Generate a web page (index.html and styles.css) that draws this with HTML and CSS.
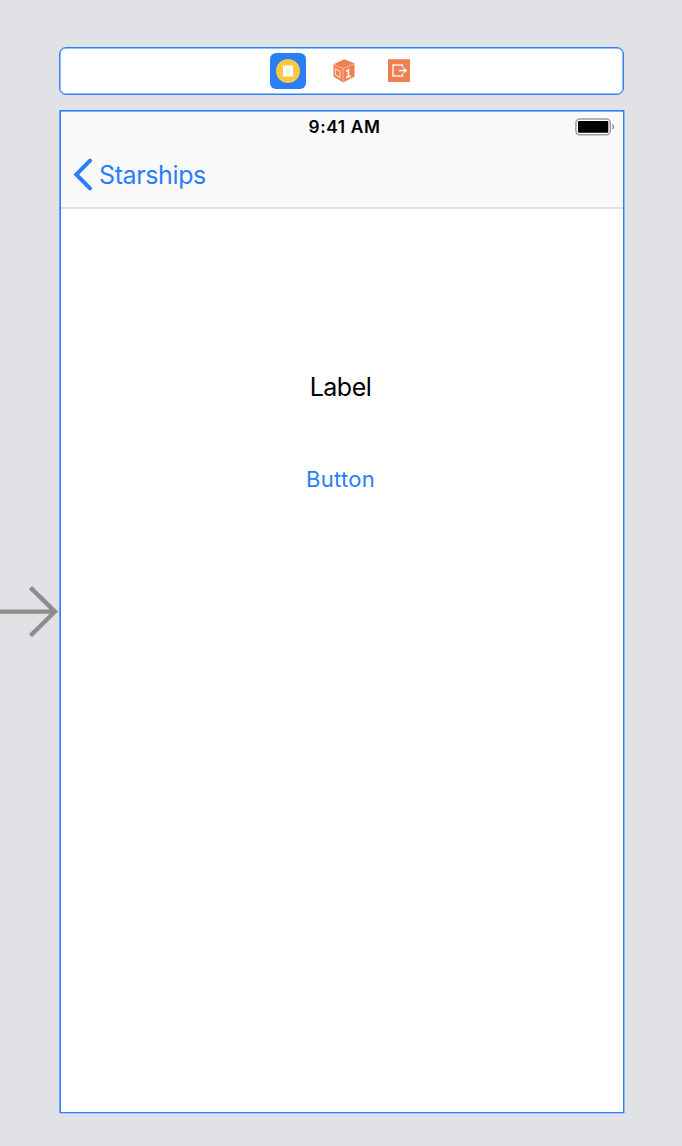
FILE: index.html
```html
<!DOCTYPE html>
<html lang="en">
<head>
<meta charset="utf-8">
<title>Storyboard</title>
<link rel="stylesheet" href="styles.css">
</head>
<body>
<main class="canvas">
  <svg class="entry-arrow" width="60" height="54" viewBox="0 0 60 54"><path d="M0 26.6H54M30.5 2.6L55 26.6L30.5 50.6" fill="none" stroke="#8d8d8e" stroke-width="4.3"/></svg>
  <header class="scene-dock">
    <span class="dock-item dock-selected">
      <svg width="24" height="24" viewBox="0 0 24 24"><circle cx="12" cy="12" r="12" fill="#f7c844"/><path d="M6.5 6.7H17.5M6.5 17.3H17.5" stroke="#fff3c9" stroke-width="1.6" stroke-dasharray="1.5 1"/><rect x="7" y="7" width="10" height="10" fill="#fff"/></svg>
    </span>
    <svg class="cube" width="22" height="24" viewBox="0 0 22 24"><path d="M11.3 .3L21.5 4.3V17.5L10 23.5L.5 17.6V5.3Z" fill="#ee8052"/><path d="M.8 5.5L10 9.5L21.3 4.6M10 9.5V23" fill="none" stroke="#fbd3c0" stroke-width=".7"/><path d="M2.5 10L7 12.2V18.5L2.5 16Z" fill="none" stroke="#fad6c6" stroke-width="1.1"/><path d="M13 12.4L15.4 11V18M13.2 18.6L17.8 17" fill="none" stroke="#fff" stroke-width="1.6"/></svg>
    <svg class="exit" width="22" height="24" viewBox="0 0 22 24"><rect y=".2" width="22" height="22.8" fill="#ee8052"/><path d="M14.5 8.5V6H5V17H14.5V14.5" fill="none" stroke="#fff2ec" stroke-width="1.5"/><path d="M11 11.5H17" stroke="#fff2ec" stroke-width="1.5"/><path d="M15.7 8.2L19.3 11.5L15.7 14.8Z" fill="#fff2ec"/></svg>
  </header>
  <section class="phone">
    <div class="top">
      <div class="status">
        <span class="time">9:41 AM</span>
        <svg class="battery" width="40" height="18" viewBox="0 0 40 18"><rect x=".9" y=".9" width="34.4" height="15.9" rx="4" fill="#fff" stroke="#9d9d9d" stroke-width="1.5"/><rect x="3" y="3" width="30.3" height="11.7" rx="1" fill="#000"/><path d="M37.3 6C39.9 6.6 39.9 11 37.3 11.6Z" fill="#999"/></svg>
      </div>
      <nav class="nav">
        <svg class="chevron" width="20" height="34" viewBox="0 0 20 34"><path d="M17 3.6L3.3 17.5L17 31.4" fill="none" stroke="#2a7ef8" stroke-width="4" stroke-linecap="round"/></svg>
        <span class="back">Starships</span>
      </nav>
    </div>
    <div class="content">
      <span class="label">Label</span>
      <button class="button">Button</button>
    </div>
  </section>
</main>
</body>
</html>
```
FILE: styles.css
```css
* { box-sizing: border-box; }
body { margin: 0; background: #e1e2e6; font-family: Inter, "Liberation Sans", sans-serif; }
.canvas { position: relative; height: 1146px; padding: 47px 58px 33px 60px; display: flex; flex-direction: column; gap: 15px; overflow: hidden; }
.entry-arrow { position: absolute; left: 0; top: 585px; }
.scene-dock { height: 48px; margin-left: -1px; background: #fff; border: 1px solid #2f80f7; border-radius: 7px; box-shadow: inset 0 0 0 .5px #2f80f7; display: flex; padding-left: 210px; align-items: center; }
.dock-item { width: 36px; height: 36px; display: flex; align-items: center; justify-content: center; }
.dock-selected { background: #2a7ef8; border-radius: 6px; }
.cube { margin-left: 27px; }
.exit { margin-left: 33px; }
.phone { height: 1003px; background: #fff; border: 1px solid #2f80f7; box-shadow: -1px 0 #659ffa, 1px 0 #8fb8f3, 0 1px #a9c7f0; }
.top { height: 98px; background: #f9f9f9; border-bottom: 2px solid #e0e0e1; box-shadow: inset 0 1px #79aefb; }
.status { height: 32px; display: grid; grid-template-columns: 1fr auto 1fr; align-items: center; padding: 0 8px 0 13px; }
.time { grid-column: 2; font-size: 17.3px; font-weight: 600; letter-spacing: .6px; line-height: 32px; }
.battery { justify-self: end; }
.nav { display: flex; align-items: center; height: 62px; padding-left: 12px; color: #2a7ef8; }
.back { font-size: 25px; letter-spacing: -.38px; margin: 2px 0 0 6px; line-height: 34px; }
.content { display: flex; flex-direction: column; align-items: center; padding: 161px 3px 0 0; }
.label { font-size: 25px; line-height: 34px; letter-spacing: -.5px; }
.button { border: 0; padding: 0; margin-top: 60px; background: none; font-family: inherit; font-size: 22px; line-height: 30px; letter-spacing: .3px; color: #2a7ef8; }
```
